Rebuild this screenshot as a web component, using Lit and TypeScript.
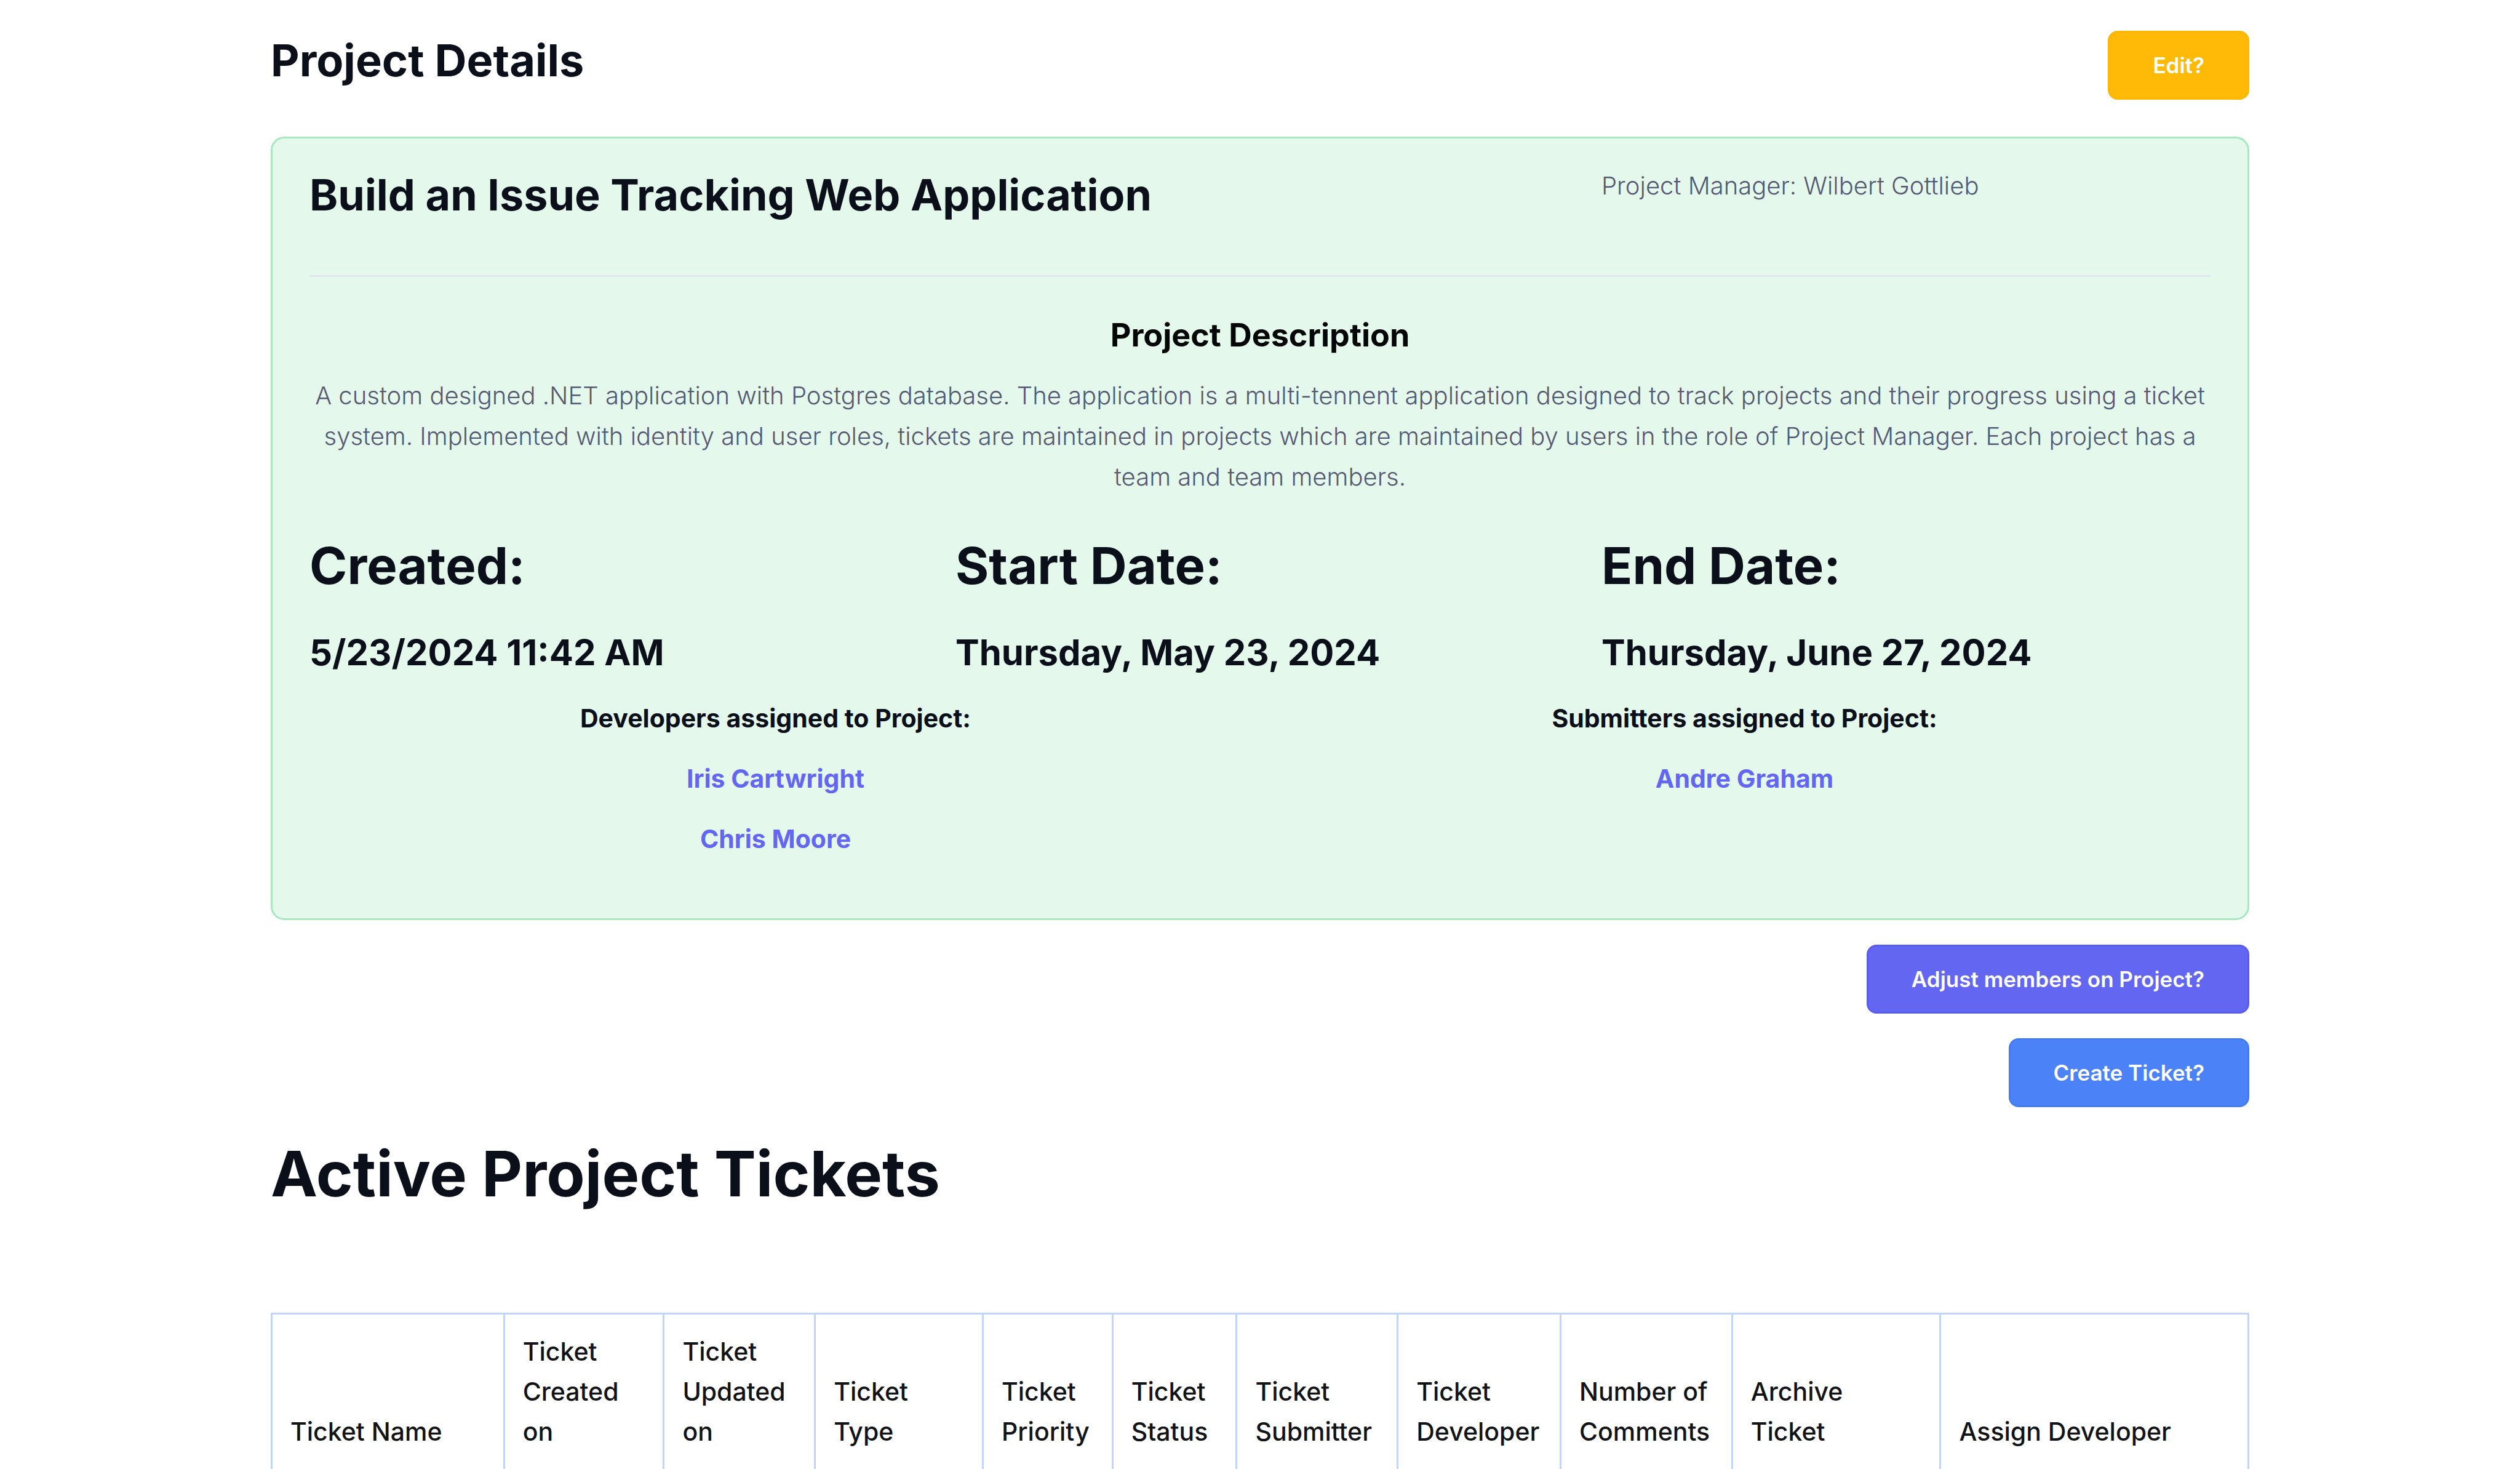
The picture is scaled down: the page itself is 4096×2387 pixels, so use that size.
import { LitElement, html, css } from "lit";
import { customElement, property } from "lit/decorators.js";

interface Column {
  label: string;
  span: number;
}

const columns: Column[] = [
  { label: "Ticket Name", span: 378 },
  { label: "Ticket Created on", span: 260 },
  { label: "Ticket Updated on", span: 246 },
  { label: "Ticket Type", span: 273 },
  { label: "Ticket Priority", span: 211 },
  { label: "Ticket Status", span: 202 },
  { label: "Ticket Submitter", span: 262 },
  { label: "Ticket Developer", span: 265 },
  { label: "Number of Comments", span: 279 },
  { label: "Archive Ticket", span: 339 },
  { label: "Assign Developer", span: 501 },
];

const totalSpan = columns.reduce((sum, column) => sum + column.span, 0);

const dates = [
  { label: "Created:", value: "5/23/2024 11:42 AM" },
  { label: "Start Date:", value: "Thursday, May 23, 2024" },
  { label: "End Date:", value: "Thursday, June 27, 2024" },
];

const teams = [
  { title: "Developers assigned to Project:", members: ["Iris Cartwright", "Chris Moore"] },
  { title: "Submitters assigned to Project:", members: ["Andre Graham"] },
];

@customElement("project-card")
export class ProjectCard extends LitElement {
  @property() name = "";
  @property() manager = "";
  @property() description = "";

  static styles = css`
    :host {
      display: block;
      padding: 44px 60px 96px;
      border: 3px solid #a7e8bf;
      border-radius: 22px;
      background: #e4f8ec;
      color: #0b0f19;
    }
    h2,
    h3,
    h4,
    h5,
    p,
    ul {
      margin: 0;
    }
    .thirds {
      display: grid;
      grid-template-columns: repeat(3, 1fr);
      column-gap: 60px;
    }
    .halves {
      display: grid;
      grid-template-columns: repeat(2, 1fr);
      column-gap: 60px;
      margin-top: 34px;
    }
    .name {
      grid-column: span 2;
      font-size: 70px;
      line-height: 96px;
      font-weight: 700;
    }
    .body {
      font-size: 40px;
      line-height: 66px;
      font-weight: 300;
      color: #565973;
    }
    .rule {
      height: 3px;
      margin: 82px 0 62px;
      border: 0;
      background: #e2e5f1;
    }
    .about {
      text-align: center;
    }
    .about-title {
      margin-bottom: 32px;
      font-size: 52px;
      line-height: 66px;
      font-weight: 700;
      color: #050608;
    }
    .dates {
      margin-top: 56px;
    }
    .date-label {
      margin-bottom: 46px;
      font-size: 83px;
      line-height: 110px;
      font-weight: 700;
    }
    .date-value {
      font-size: 58px;
      line-height: 80px;
      font-weight: 700;
    }
    .team {
      display: flex;
      flex-direction: column;
      gap: 32px;
      text-align: center;
      font-size: 41px;
      line-height: 66px;
      font-weight: 700;
    }
    .team-title {
      font-size: 41px;
      font-weight: 700;
    }
    .members {
      display: flex;
      flex-direction: column;
      gap: 32px;
      padding: 0;
      list-style: none;
    }
    .member {
      color: #6366f1;
      text-decoration: none;
    }
  `;

  render() {
    return html`
      <div class="thirds">
        <h2 class="name">${this.name}</h2>
        <p class="body">Project Manager: ${this.manager}</p>
      </div>
      <hr class="rule" />
      <div class="about">
        <h3 class="about-title">Project Description</h3>
        <p class="body">${this.description}</p>
      </div>
      <div class="thirds dates">
        ${dates.map(
          (date) => html`
            <div>
              <h3 class="date-label">${date.label}</h3>
              <h4 class="date-value">${date.value}</h4>
            </div>
          `,
        )}
      </div>
      <div class="halves">
        ${teams.map(
          (team) => html`
            <div class="team">
              <h5 class="team-title">${team.title}</h5>
              <ul class="members">
                ${team.members.map((member) => html`<li><a class="member" href="#">${member}</a></li>`)}
              </ul>
            </div>
          `,
        )}
      </div>
    `;
  }
}

@customElement("ticket-table")
export class TicketTable extends LitElement {
  static styles = css`
    :host {
      display: block;
    }
    table {
      width: 100%;
      table-layout: fixed;
      border-collapse: collapse;
    }
    th {
      padding: 28px 28px 28px 29px;
      border: 3px solid #c1d5fc;
      border-bottom: 0;
      color: #121316;
      font-size: 41px;
      line-height: 65px;
      font-weight: 500;
      text-align: left;
      vertical-align: bottom;
    }
  `;

  render() {
    return html`
      <table>
        <colgroup>
          ${columns.map((column) => html`<col style="width:${(column.span / totalSpan) * 100}%" />`)}
        </colgroup>
        <thead>
          <tr>
            ${columns.map((column) => html`<th scope="col">${column.label}</th>`)}
          </tr>
        </thead>
      </table>
    `;
  }
}

@customElement("app-root")
export class AppRoot extends LitElement {
  static styles = css`
    :host {
      display: block;
      background: #fff;
      color: #0b0f19;
      font-family: Inter, "Open Sans", sans-serif;
    }
    .page {
      max-width: 3216px;
      margin: 0 auto;
      padding-top: 50px;
    }
    .header {
      display: flex;
      justify-content: space-between;
      align-items: flex-start;
      margin-bottom: 60px;
    }
    h1,
    h2 {
      margin: 0;
      font-weight: 700;
    }
    .page-title {
      font-size: 72px;
      line-height: 96px;
    }
    .actions {
      display: flex;
      flex-direction: column;
      align-items: flex-end;
      gap: 40px;
      margin: 40px 0;
    }
    .btn {
      padding: 29px 70px;
      border: 3px solid transparent;
      border-radius: 16px;
      color: #fff;
      font: 600 35px/48px Inter, "Open Sans", sans-serif;
    }
    .warning {
      border-color: #ffb704;
      background: #ffba08;
    }
    .primary {
      border-color: #595cf0;
      background: #6366f1;
    }
    .info {
      border-color: #417bf6;
      background: #4c82f7;
    }
    .section-title {
      margin-bottom: 158px;
      font-size: 102px;
      line-height: 136px;
    }
  `;

  render() {
    return html`
      <main class="page">
        <header class="header">
          <h1 class="page-title">Project Details</h1>
          <button class="btn warning" type="button">Edit?</button>
        </header>
        <project-card
          name="Build an Issue Tracking Web Application"
          manager="Wilbert Gottlieb"
          description="A custom designed .NET application with Postgres database. The application is a multi-tennent application designed to track projects and their progress using a ticket system. Implemented with identity and user roles, tickets are maintained in projects which are maintained by users in the role of Project Manager. Each project has a team and team members."
        ></project-card>
        <div class="actions">
          <button class="btn primary" type="button">Adjust members on Project?</button>
          <button class="btn info" type="button">Create Ticket?</button>
        </div>
        <h2 class="section-title">Active Project Tickets</h2>
        <ticket-table></ticket-table>
      </main>
    `;
  }
}
